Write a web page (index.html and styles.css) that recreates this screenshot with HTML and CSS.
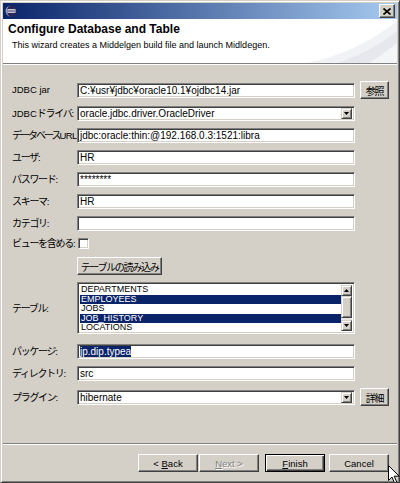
FILE: index.html
```html
<!DOCTYPE html>
<html lang="ja">
<head>
    <meta charset="UTF-8">
    <title>Configure Database and Table</title>
    <link rel="stylesheet" href="styles.css">
</head>
<body>
    <div class="window">
        <div class="titlebar">
            <svg class="app-icon" width="12" height="12" viewBox="0 0 12 12">
                <circle cx="6" cy="6" r="5.5" fill="#2b295a"/>
                <path d="M6 0.5a5.5 5.5 0 0 0 0 11a4 5.5 0 0 1 0-11z" fill="#9a98c0"/>
                <path d="M2.5 4.6h8M2 6h9M2.5 7.4h8" stroke="#fff" stroke-width="0.8"/>
            </svg>
            <div class="close-btn">
                <svg width="8" height="7" viewBox="0 0 8 7"><path d="M0.5 0.5l7 6M7.5 0.5l-7 6" stroke="#000" stroke-width="1.6"/></svg>
            </div>
        </div>

        <div class="banner">
            <h1>Configure Database and Table</h1>
            <p>This wizard creates a Middelgen build file and launch Midldegen.</p>
            <svg class="banner-art" width="110" height="44" viewBox="0 0 110 44">
                <path d="M20 44 Q70 34 110 2 V44z" fill="#f1f2f5"/>
                <path d="M52 44 Q88 30 110 12 V44z" fill="#e6e8ed"/>
                <path d="M82 44 Q98 34 110 24 V44z" fill="#f4f5f7"/>
            </svg>
        </div>
        <div class="etched"></div>

        <div class="form">
            <div class="row row-btn">
                <label>JDBC jar</label>
                <div class="field">C:¥usr¥jdbc¥oracle10.1¥ojdbc14.jar</div>
                <button class="btn side"><span class="ja">参照</span></button>
            </div>
            <div class="row">
                <label>JDBC<span class="ja">ドライバ</span>:</label>
                <div class="field combo">
                    <span class="combo-text">oracle.jdbc.driver.OracleDriver</span>
                    <span class="drop"><svg width="5" height="3" viewBox="0 0 5 3"><path d="M0 0h5l-2.5 3z"/></svg></span>
                </div>
            </div>
            <div class="row">
                <label class="tight"><span class="ja">データベース</span>URL:</label>
                <div class="field">jdbc:oracle:thin:@192.168.0.3:1521:libra</div>
            </div>
            <div class="row">
                <label><span class="ja">ユーザ</span>:</label>
                <div class="field">HR</div>
            </div>
            <div class="row">
                <label><span class="ja">パスワード</span>:</label>
                <div class="field">********</div>
            </div>
            <div class="row">
                <label><span class="ja">スキーマ</span>:</label>
                <div class="field">HR</div>
            </div>
            <div class="row">
                <label><span class="ja">カテゴリ</span>:</label>
                <div class="field"></div>
            </div>
            <div class="row row-check">
                <label><span class="ja">ビューを含める</span>:</label>
                <div class="checkbox"></div>
            </div>
            <div class="row row-btn row-load">
                <label></label>
                <button class="btn load"><span class="ja">テーブルの読み込み</span></button>
            </div>
            <div class="row row-list">
                <label><span class="ja">テーブル</span>:</label>
                <div class="field list">
                    <div class="items">
                        <div class="item">DEPARTMENTS</div>
                        <div class="item selected">EMPLOYEES</div>
                        <div class="item">JOBS</div>
                        <div class="item selected">JOB_HISTORY</div>
                        <div class="item">LOCATIONS</div>
                        <div class="item">REGIONS</div>
                    </div>
                    <div class="scrollbar">
                        <span class="sb-btn"><svg width="5" height="3" viewBox="0 0 5 3"><path d="M0 3h5l-2.5-3z"/></svg></span>
                        <span class="sb-track"><span class="sb-thumb"></span></span>
                        <span class="sb-btn"><svg width="5" height="3" viewBox="0 0 5 3"><path d="M0 0h5l-2.5 3z"/></svg></span>
                    </div>
                </div>
            </div>
            <div class="row row-package">
                <label><span class="ja">パッケージ</span>:</label>
                <div class="field"><span class="sel">jp.dip.typea</span></div>
            </div>
            <div class="row">
                <label><span class="ja">ディレクトリ</span>:</label>
                <div class="field">src</div>
            </div>
            <div class="row row-btn">
                <label><span class="ja">プラグイン</span>:</label>
                <div class="field combo">
                    <span class="combo-text">hibernate</span>
                    <span class="drop"><svg width="5" height="3" viewBox="0 0 5 3"><path d="M0 0h5l-2.5 3z"/></svg></span>
                </div>
                <button class="btn side"><span class="ja">詳細</span></button>
            </div>
        </div>

        <div class="etched"></div>
        <div class="footer">
            <button class="btn nav">&lt; <u>B</u>ack</button>
            <button class="btn nav disabled"><u>N</u>ext &gt;</button>
            <button class="btn nav default"><u>F</u>inish</button>
            <button class="btn nav">Cancel</button>
        </div>

        <svg class="cursor" width="12" height="19" viewBox="0 0 12 19">
            <path d="M0.5 0.5v15l3.5-3.5 2.5 6 2.2-1-2.5-5.8h5z" fill="#fff" stroke="#000" stroke-width="1"/>
        </svg>
    </div>
</body>
</html>
```

FILE: styles.css
```css
body {
    margin: 0;
    background: #d4d0c8;
    font-family: "Liberation Sans", Arial, sans-serif;
    font-size: 9.5px;
    color: #000;
}
.window {
    position: relative;
    width: 400px;
    height: 483px;
    box-sizing: border-box;
    border: 1px solid;
    border-color: #d4d0c8 #404040 #404040 #d4d0c8;
    box-shadow: inset 1px 1px #fff, inset -1px -1px #808080;
    padding: 2px;
    display: flex;
    flex-direction: column;
    overflow: hidden;
}
.ja {
    font-family: "Noto Sans CJK JP", sans-serif;
    font-size: 10px;
    letter-spacing: -1.3px;
}
.titlebar {
    height: 16px;
    flex: none;
    display: flex;
    align-items: center;
    padding: 0 2px;
    background: linear-gradient(to right, #0a246a, #a6caf0);
}
.app-icon {
    display: block;
}
.close-btn {
    margin-left: auto;
    width: 16px;
    height: 14px;
    box-sizing: border-box;
    display: flex;
    align-items: center;
    justify-content: center;
    background: #d4d0c8;
    border: 1px solid;
    border-color: #fff #404040 #404040 #fff;
    box-shadow: inset -1px -1px #808080;
}
.close-btn svg {
    display: block;
}
.banner {
    position: relative;
    height: 44px;
    flex: none;
    box-sizing: border-box;
    padding: 3px 5px 0;
    background: #fff;
    overflow: hidden;
}
.banner h1 {
    position: relative;
    z-index: 1;
    margin: 0;
    font-size: 12px;
    line-height: 14px;
    font-weight: bold;
}
.banner p {
    position: relative;
    z-index: 1;
    margin: 4px 0 0;
    padding-left: 4px;
    font-size: 9px;
    line-height: 11px;
}
.banner-art {
    position: absolute;
    right: 0;
    bottom: 0;
}
.etched {
    flex: none;
    height: 0;
    border-top: 1px solid #808080;
    border-bottom: 1px solid #fff;
}
.form {
    flex: 1;
    display: flex;
    flex-direction: column;
    gap: 7px;
    padding: 16px 8px 0 9px;
}
.row {
    display: flex;
    align-items: center;
    height: 15px;
}
.row label {
    flex: none;
    width: 65px;
    white-space: nowrap;
    line-height: 12px;
}
.row label.tight {
    letter-spacing: -0.6px;
}
.row label.tight .ja {
    letter-spacing: -2px;
}
.row-btn {
    height: 18px;
}
.row-check {
    height: 11px;
}
.row-load {
    margin-top: 1px;
}
.row-list {
    height: 52px;
}
.row-package {
    margin-top: 3px;
}
.field {
    position: relative;
    z-index: 1;
    width: 278px;
    height: 15px;
    box-sizing: border-box;
    padding: 0 2px;
    background: #fff;
    border: 1px solid;
    border-color: #808080 #fff #fff #808080;
    box-shadow: inset 1px 1px #404040, inset -1px -1px #d4d0c8;
    font-size: 10px;
    line-height: 13px;
    white-space: nowrap;
    overflow: hidden;
}
.sel {
    background: #0a246a;
    color: #fff;
}
.combo {
    display: flex;
    padding-right: 2px;
}
.combo-text {
    flex: 1;
}
.drop,
.sb-btn {
    flex: none;
    width: 11px;
    height: 11px;
    margin-top: 1px;
    box-sizing: border-box;
    display: flex;
    align-items: center;
    justify-content: center;
    background: #d4d0c8;
    border: 1px solid;
    border-color: #d4d0c8 #404040 #404040 #d4d0c8;
    box-shadow: inset 1px 1px #fff, inset -1px -1px #808080;
}
.drop svg,
.sb-btn svg {
    display: block;
}
.checkbox {
    width: 11px;
    height: 11px;
    margin-left: 1px;
    box-sizing: border-box;
    background: #fff;
    border: 1px solid;
    border-color: #808080 #fff #fff #808080;
    box-shadow: inset 1px 1px #404040, inset -1px -1px #d4d0c8;
}
.btn {
    height: 18px;
    box-sizing: border-box;
    padding: 0;
    background: #d4d0c8;
    border: 1px solid;
    border-color: #fff #404040 #404040 #fff;
    box-shadow: inset -1px -1px #808080;
    font-family: "Liberation Sans", Arial, sans-serif;
    font-size: 9.5px;
    color: #000;
    white-space: nowrap;
}
.btn.side {
    width: 29px;
    margin-left: 5px;
}
.btn.load {
    width: 85px;
}
.list {
    height: 52px;
    display: flex;
    padding: 2px;
}
.items {
    flex: 1;
    font-size: 9px;
    line-height: 9.6px;
    overflow: hidden;
}
.item {
    padding-left: 1px;
}
.item.selected {
    background: #0a246a;
    color: #fff;
}
.scrollbar {
    flex: none;
    width: 11px;
    display: flex;
    flex-direction: column;
}
.scrollbar .sb-btn {
    margin-top: 0;
}
.sb-track {
    flex: 1;
    background: #e8e6e1;
    display: flex;
    flex-direction: column;
}
.sb-thumb {
    height: 22px;
    box-sizing: border-box;
    background: #d4d0c8;
    border: 1px solid;
    border-color: #d4d0c8 #404040 #404040 #d4d0c8;
    box-shadow: inset 1px 1px #fff, inset -1px -1px #808080;
}
.footer {
    flex: none;
    height: 35px;
    display: flex;
    justify-content: flex-end;
    padding: 9px 8px 0 0;
    box-sizing: border-box;
}
.btn.nav {
    width: 60px;
}
.btn.nav + .btn.nav {
    margin-left: 1px;
}
.btn.default {
    margin-left: 6px !important;
    border-color: #000;
    box-shadow: inset 1px 1px #fff, inset -1px -1px #404040, inset -2px -2px #808080;
}
.btn.default + .btn.nav {
    margin-left: 4px;
}
.btn.disabled {
    color: #808080;
    text-shadow: 1px 1px #fff;
}
.cursor {
    position: absolute;
    left: 387px;
    top: 464px;
}
```
